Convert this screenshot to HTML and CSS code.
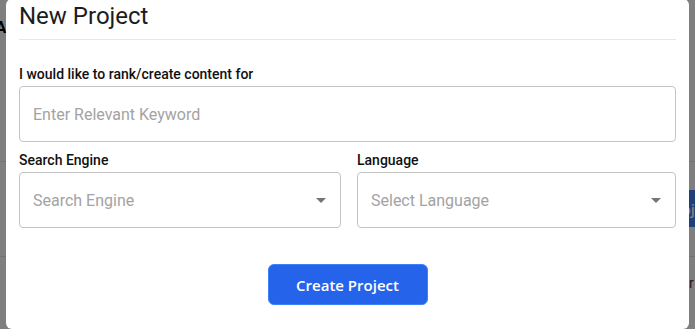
FILE: index.html
```html
<!DOCTYPE html>
<html lang="en">
<head>
    <meta charset="UTF-8">
    <meta name="viewport" content="width=device-width, initial-scale=1.0">
    <title>New Project</title>
    <link rel="stylesheet" href="styles.css">
</head>
<body>
    <div class="page">
        <h1 class="page-title">A</h1>
        <div class="page-row page-row-action">
            <button class="page-btn">Project</button>
        </div>
        <div class="page-row page-row-text">
            <span class="page-cell">r</span>
        </div>
    </div>

    <div class="backdrop"></div>

    <div class="modal">
        <h2 class="modal-title">New Project</h2>
        <hr class="modal-divider">

        <form class="project-form">
            <label class="field-label" for="keyword">I would like to rank/create content for</label>
            <input class="field-input" id="keyword" type="text" placeholder="Enter Relevant Keyword">

            <div class="field-grid">
                <div class="field">
                    <label class="field-label">Search Engine</label>
                    <div class="field-select">
                        <span class="placeholder">Search Engine</span>
                        <span class="caret"></span>
                    </div>
                </div>
                <div class="field">
                    <label class="field-label">Language</label>
                    <div class="field-select">
                        <span class="placeholder">Select Language</span>
                        <span class="caret"></span>
                    </div>
                </div>
            </div>

            <div class="form-actions">
                <button type="button" class="create-btn">Create Project</button>
            </div>
        </form>
    </div>
</body>
</html>
```

FILE: styles.css
```css
:root {
    --text-dark: #1c1c1c;
    --border: #c4c4c4;
    --placeholder: #a3a3a3;
    --primary: #2563eb;
    --primary-edge: #3b82f6;
}

* {
    margin: 0;
    padding: 0;
    box-sizing: border-box;
}

body {
    font-family: Roboto, "Noto Sans", sans-serif;
    background: #ffffff;
    width: 695px;
    height: 329px;
    overflow: hidden;
}

/* page behind the dialog */
.page {
    width: 100%;
    height: 100%;
}

.page-title {
    font-size: 17px;
    font-weight: 700;
    color: #000;
    line-height: 20px;
    padding-top: 17px;
    text-indent: -5px;
    height: 162px;
    border-bottom: 1px solid #e6e6e6;
}

.page-row-action {
    display: flex;
    justify-content: flex-end;
    padding-top: 28px;
    height: 95px;
    border-bottom: 1px solid #e6e6e6;
    margin-right: -34px;
}

.page-btn {
    background: #3d7ef0;
    color: #fff;
    border: none;
    height: 37px;
    padding: 0 12px;
    font-family: "Open Sans", sans-serif;
    font-weight: 600;
    font-size: 15px;
}

.page-row-text {
    display: flex;
    justify-content: flex-end;
    padding-top: 18px;
    margin-right: -2px;
}

.page-cell {
    font-size: 14px;
    color: #333;
    width: 8px;
}

.backdrop {
    position: fixed;
    inset: 0;
    background: rgba(0, 0, 0, 0.5);
}

/* dialog */
.modal {
    position: fixed;
    top: -1px;
    left: 6px;
    right: 6px;
    background: #fff;
    border-radius: 6px;
    padding: 1px 13px 24px;
}

.modal-title {
    font-size: 24px;
    font-weight: 400;
    line-height: 32px;
    color: var(--text-dark);
}

.modal-divider {
    border: none;
    border-top: 1px solid #e6e6e6;
    margin-top: 7px;
}

.project-form {
    display: flex;
    flex-direction: column;
    padding-top: 24px;
}

.field-label {
    display: block;
    font-size: 14px;
    font-weight: 500;
    line-height: 20px;
    color: #111;
    margin-bottom: 2px;
}

.field-input,
.field-select {
    width: 100%;
    height: 56px;
    border: 1px solid var(--border);
    border-radius: 4px;
    font-family: Roboto, sans-serif;
    font-size: 16px;
    padding: 0 13px;
    outline: none;
    color: var(--text-dark);
}

.field-input::placeholder,
.placeholder {
    color: var(--placeholder);
}

.field-grid {
    display: grid;
    grid-template-columns: 322px 1fr;
    gap: 16px;
    margin-top: 8px;
}

.field-select {
    display: flex;
    align-items: center;
    justify-content: space-between;
}

.caret {
    width: 0;
    height: 0;
    border-left: 5px solid transparent;
    border-right: 5px solid transparent;
    border-top: 5px solid #757575;
    margin-right: 1px;
}

.form-actions {
    display: flex;
    justify-content: center;
    margin-top: 36px;
}

.create-btn {
    width: 160px;
    height: 41px;
    background: var(--primary);
    border: 1px solid var(--primary-edge);
    border-radius: 6px;
    color: #fff;
    font-family: "Open Sans", sans-serif;
    font-weight: 600;
    font-size: 15px;
    cursor: pointer;
}
```
